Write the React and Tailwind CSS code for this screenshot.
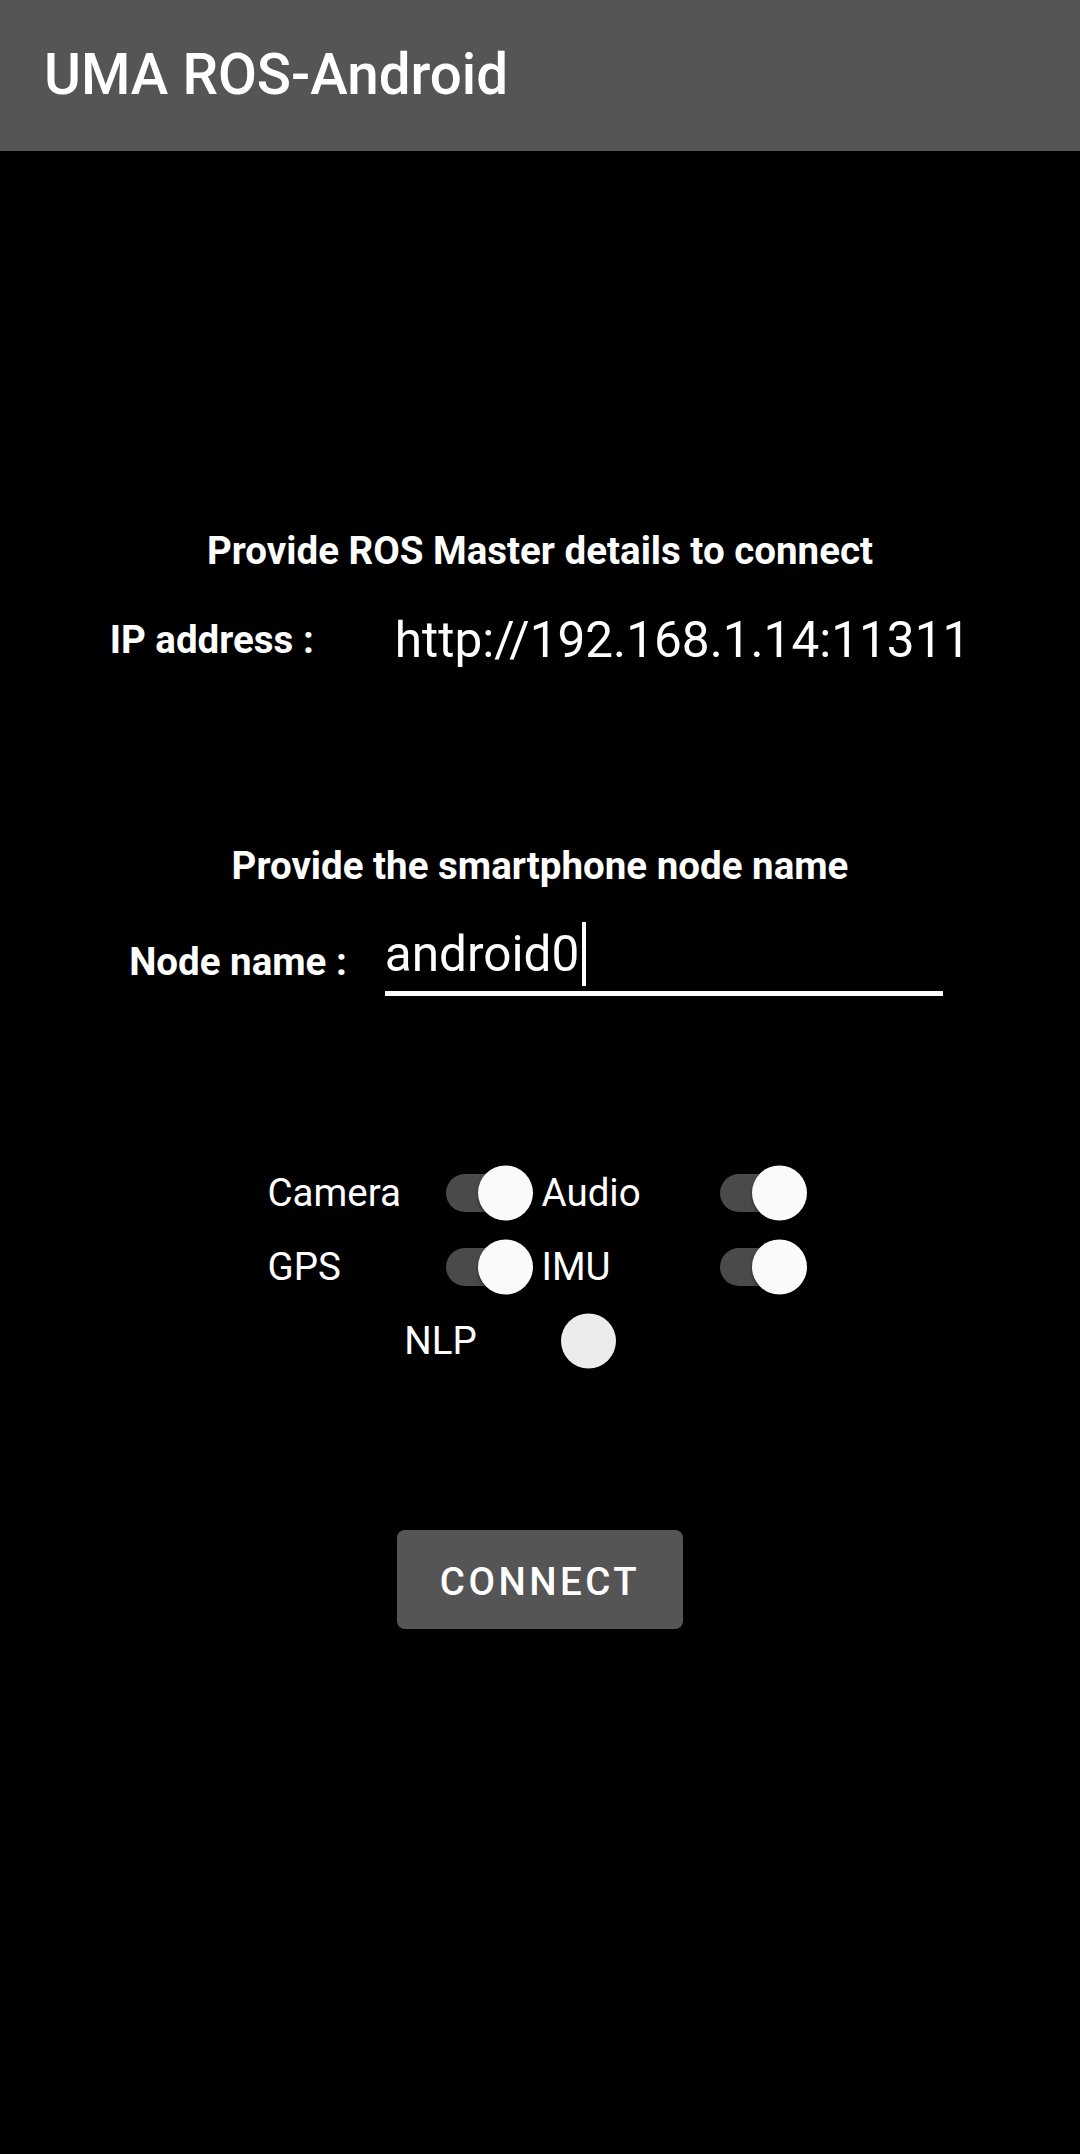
const toggles = [
  { label: 'Camera', on: true },
  { label: 'Audio', on: true },
  { label: 'GPS', on: true },
  { label: 'IMU', on: true },
];

function Toggle({ on }) {
  return (
    <div className="relative w-[76px] h-[38px]">
      <div className={on ? 'absolute inset-0 rounded-full bg-[#4a4a4a]' : 'absolute inset-0 rounded-full bg-black'} />
      <div
        className={
          on
            ? 'absolute -right-[11px] top-1/2 -translate-y-1/2 w-[55px] h-[55px] rounded-full bg-[#fafafa] shadow-[0_2px_3px_rgba(0,0,0,0.5)]'
            : 'absolute -left-[11px] top-1/2 -translate-y-1/2 w-[55px] h-[55px] rounded-full bg-[#ececec] shadow-[0_2px_3px_rgba(0,0,0,0.5)]'
        }
      />
    </div>
  );
}

export default function App() {
  return (
    <div className="w-[1080px] h-[2154px] bg-black text-white font-['Roboto',sans-serif] flex flex-col">
      <header className="h-[151px] bg-[#555555] flex items-center pl-[44px]">
        <h1 className="text-[56.5px] font-medium leading-none">UMA ROS-Android</h1>
      </header>

      <main className="flex flex-col items-center">
        <p className="mt-[377px] text-[38.5px] leading-[46px] font-bold">Provide ROS Master details to connect</p>

        <div className="mt-[37px] flex items-center gap-[81px]">
          <span className="text-[38.5px] font-bold leading-[46px]">IP address :</span>
          <span className="text-[49.5px] leading-[58px]">http://192.168.1.14:11311</span>
        </div>

        <p className="mt-[174px] text-[38.5px] leading-[46px] font-bold">Provide the smartphone node name</p>

        <div className="mt-[33px] flex items-center gap-[38px] -translate-x-[4px]">
          <span className="text-[38.5px] font-bold leading-[46px] mt-[6px]">Node name :</span>
          <div className="w-[558px] border-b-[5px] border-white pb-[5px] flex items-center">
            <span className="text-[49.5px] leading-[58px]">android0</span>
            <span className="w-[4px] h-[64px] bg-white ml-[3px]" />
          </div>
        </div>

        <div className="mt-[174px] grid grid-cols-2 gap-x-[9px] gap-y-[29px] -translate-x-[3px]">
          {toggles.map((t) => (
            <div key={t.label} className="w-[265px] h-[45px] flex items-center justify-between pr-[11px]">
              <span className="text-[38.5px] leading-[45px]">{t.label}</span>
              <Toggle on={t.on} />
            </div>
          ))}
        </div>

        <div className="mt-[29px] flex items-center gap-[95px] -translate-x-[14px]">
          <span className="text-[38.5px] leading-[45px]">NLP</span>
          <Toggle on={false} />
        </div>

        <button className="mt-[167px] w-[286px] h-[99px] rounded-[8px] bg-[#555555] text-[38.5px] font-medium tracking-[0.09em] leading-none pt-[5px]">
          CONNECT
        </button>
      </main>
    </div>
  );
}
